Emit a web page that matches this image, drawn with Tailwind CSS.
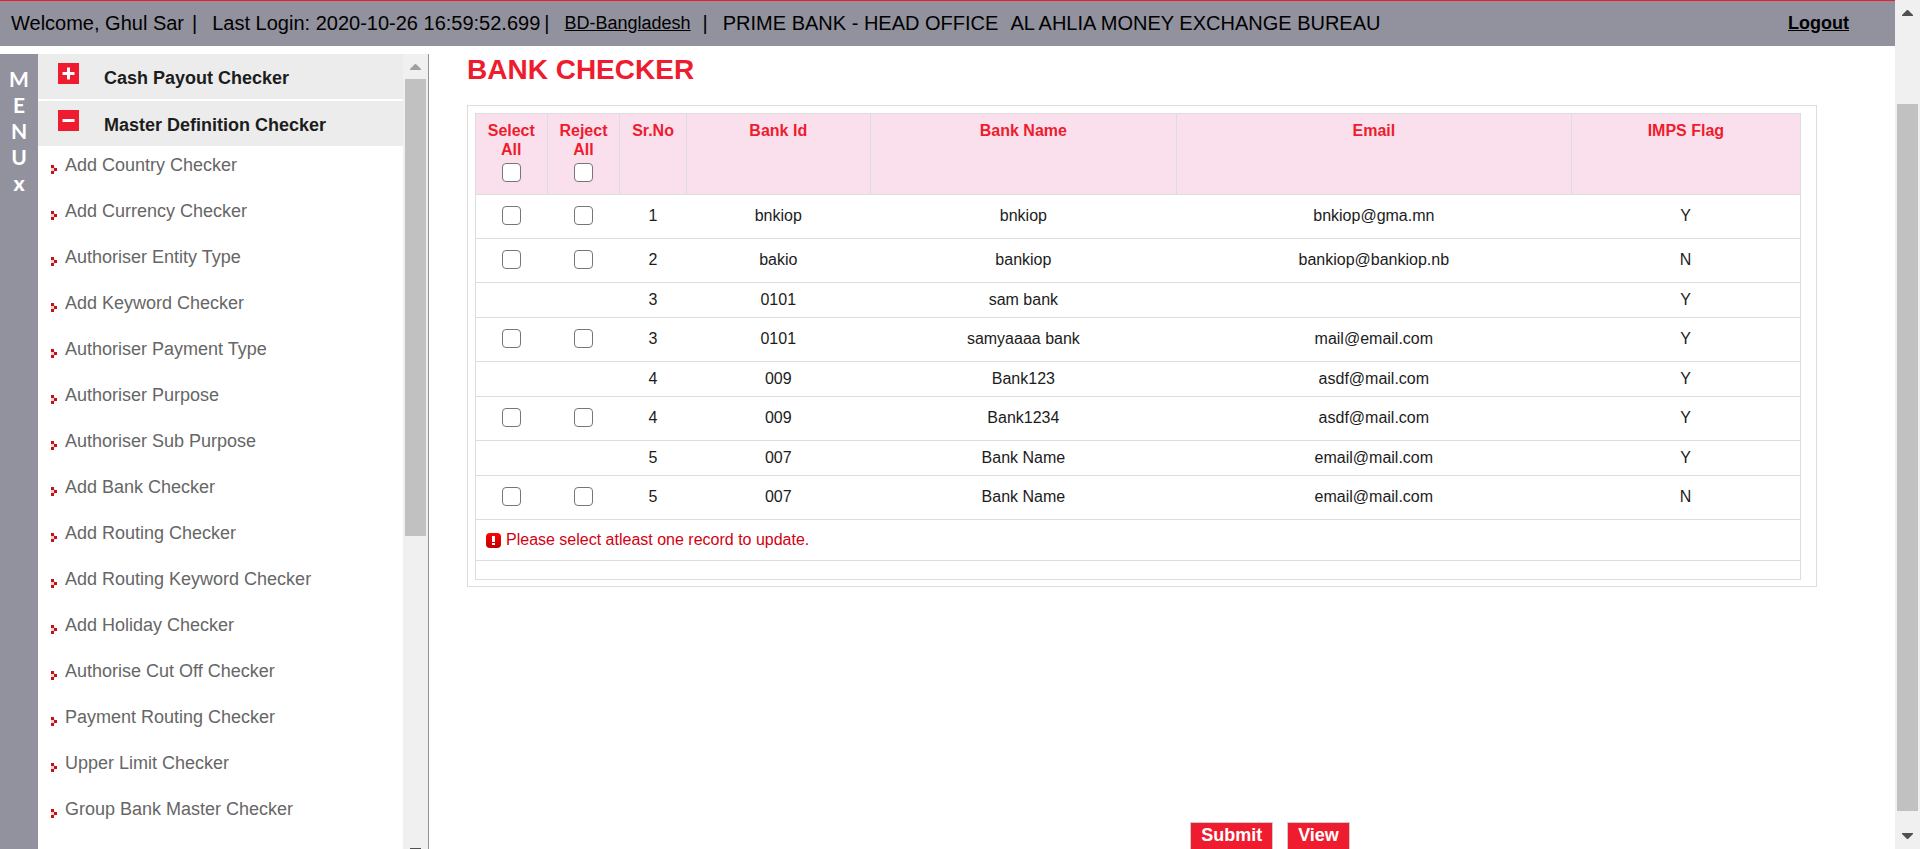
<!DOCTYPE html>
<html lang="en">
<head>
<meta charset="utf-8">
<title>Bank Checker</title>
<script src="https://cdn.jsdelivr.net/npm/@tailwindcss/browser@4"></script>
</head>
<body class="flex h-screen overflow-hidden bg-white font-['Liberation_Sans',Arial,sans-serif] text-black">
<svg class="hidden" aria-hidden="true">
  <symbol id="bullet" viewBox="0 0 6 9"><path fill="#f3cfd0" d="M0 3h3v3H0zM3 2h1v1H3zM3 6h1v1H3z"/><path fill="#c01416" d="M0 0h3v3H0zM3 3h3v3H3zM0 6h3v3H0z"/></symbol>
</svg>

<div class="flex min-w-0 flex-1 flex-col">
  <header class="flex h-[46px] shrink-0 items-center whitespace-nowrap border-t border-[#ee1c2e] bg-[#92929e] pr-[46px] pb-0.5 pl-[11px] text-xl">
    <span>Welcome, Ghul Sar</span>
    <span class="ml-2">|</span>
    <span class="ml-[15px]">Last Login: 2020-10-26 16:59:52.699</span>
    <span class="ml-1">|</span>
    <a href="#" class="ml-[15px] text-lg underline">BD-Bangladesh</a>
    <span class="ml-3">|</span>
    <span class="ml-[15px]">PRIME BANK - HEAD OFFICE</span>
    <span class="ml-3">AL AHLIA MONEY EXCHANGE BUREAU</span>
    <a href="#" class="ml-auto text-lg font-bold underline">Logout</a>
  </header>

  <div class="flex min-h-0 flex-1">
    <aside class="mt-2 flex shrink-0 border-r border-[#92929e]">
      <button type="button" class="flex w-[38px] flex-col items-center bg-[#92929e] pt-3 font-['Lato',sans-serif] text-[21px] leading-[26px] font-bold text-white">
        <span>M</span><span>E</span><span>N</span><span>U</span><span class="font-black">x</span>
      </button>
      <nav class="w-[365px] overflow-hidden text-lg text-[#666]">
        <button type="button" class="mb-0.5 flex h-[45px] w-full items-start bg-[#ececec] pt-[9px] pl-5 text-left font-bold text-[#1c1c1c]">
          <svg class="size-[21px] shrink-0" viewBox="0 0 21 21"><path fill="#ee1c2e" d="M0 0h21v21H0z"/><path stroke="#fff" stroke-width="3" d="M4.500 10.500h12M10.500 4.500v12"/></svg>
          <span class="ml-[25px] pt-px">Cash Payout Checker</span>
        </button>
        <button type="button" class="flex h-[45px] w-full items-start bg-[#ececec] pt-[9px] pl-5 text-left font-bold text-[#1c1c1c]">
          <svg class="size-[21px] shrink-0" viewBox="0 0 21 21"><path fill="#ee1c2e" d="M0 0h21v21H0z"/><path stroke="#fff" stroke-width="3" d="M4.500 10.500h12"/></svg>
          <span class="ml-[25px] pt-px">Master Definition Checker</span>
        </button>
        <ul class="-mt-1">
          <li><a href="#" class="flex h-[46px] items-center pl-[13px]"><svg class="mt-2 mr-2 h-[9px] w-1.5"><use href="#bullet"/></svg>Add Country Checker</a></li>
          <li><a href="#" class="flex h-[46px] items-center pl-[13px]"><svg class="mt-2 mr-2 h-[9px] w-1.5"><use href="#bullet"/></svg>Add Currency Checker</a></li>
          <li><a href="#" class="flex h-[46px] items-center pl-[13px]"><svg class="mt-2 mr-2 h-[9px] w-1.5"><use href="#bullet"/></svg>Authoriser Entity Type</a></li>
          <li><a href="#" class="flex h-[46px] items-center pl-[13px]"><svg class="mt-2 mr-2 h-[9px] w-1.5"><use href="#bullet"/></svg>Add Keyword Checker</a></li>
          <li><a href="#" class="flex h-[46px] items-center pl-[13px]"><svg class="mt-2 mr-2 h-[9px] w-1.5"><use href="#bullet"/></svg>Authoriser Payment Type</a></li>
          <li><a href="#" class="flex h-[46px] items-center pl-[13px]"><svg class="mt-2 mr-2 h-[9px] w-1.5"><use href="#bullet"/></svg>Authoriser Purpose</a></li>
          <li><a href="#" class="flex h-[46px] items-center pl-[13px]"><svg class="mt-2 mr-2 h-[9px] w-1.5"><use href="#bullet"/></svg>Authoriser Sub Purpose</a></li>
          <li><a href="#" class="flex h-[46px] items-center pl-[13px]"><svg class="mt-2 mr-2 h-[9px] w-1.5"><use href="#bullet"/></svg>Add Bank Checker</a></li>
          <li><a href="#" class="flex h-[46px] items-center pl-[13px]"><svg class="mt-2 mr-2 h-[9px] w-1.5"><use href="#bullet"/></svg>Add Routing Checker</a></li>
          <li><a href="#" class="flex h-[46px] items-center pl-[13px]"><svg class="mt-2 mr-2 h-[9px] w-1.5"><use href="#bullet"/></svg>Add Routing Keyword Checker</a></li>
          <li><a href="#" class="flex h-[46px] items-center pl-[13px]"><svg class="mt-2 mr-2 h-[9px] w-1.5"><use href="#bullet"/></svg>Add Holiday Checker</a></li>
          <li><a href="#" class="flex h-[46px] items-center pl-[13px]"><svg class="mt-2 mr-2 h-[9px] w-1.5"><use href="#bullet"/></svg>Authorise Cut Off Checker</a></li>
          <li><a href="#" class="flex h-[46px] items-center pl-[13px]"><svg class="mt-2 mr-2 h-[9px] w-1.5"><use href="#bullet"/></svg>Payment Routing Checker</a></li>
          <li><a href="#" class="flex h-[46px] items-center pl-[13px]"><svg class="mt-2 mr-2 h-[9px] w-1.5"><use href="#bullet"/></svg>Upper Limit Checker</a></li>
          <li><a href="#" class="flex h-[46px] items-center pl-[13px]"><svg class="mt-2 mr-2 h-[9px] w-1.5"><use href="#bullet"/></svg>Group Bank Master Checker</a></li>
        </ul>
      </nav>
      <!-- menu scrollbar -->
      <div class="flex w-[25px] flex-col items-center bg-[#f0f0f0]">
        <svg class="mt-[10px] h-1.5 w-[11px] shrink-0" viewBox="0 0 11 6"><path fill="#a0a0a0" d="M5 0h1l5 5v1H0V5z"/></svg>
        <div class="mt-[9px] h-[457px] w-[21px] shrink-0 bg-[#c1c1c1]"></div>
        <div class="mt-auto h-px w-[11px] bg-[#505050]"></div>
      </div>
    </aside>

    <main class="min-w-0 flex-1 overflow-hidden pr-[78px] pl-[38px]">
      <h1 class="pt-2 text-[28px] leading-[32px] font-bold text-[#ee1c2e]">BANK CHECKER</h1>
      <section class="mt-[19px] border border-[#ddd] pt-[7px] pr-[15px] pb-1.5 pl-[7px]">
        <table class="w-full table-fixed border-collapse border border-[#ddd] text-center text-base leading-[19px]">
          <colgroup><col class="w-[5.4%]"><col class="w-[5.5%]"><col class="w-[5%]"><col class="w-[13.9%]"><col class="w-[23.1%]"><col class="w-[29.8%]"><col class="w-[17.3%]"></colgroup>
          <thead class="bg-[#fae0ec] align-top text-[#ee1c2e]">
            <tr>
              <th class="border border-[#ddd] pt-[7px] pb-3"><label class="flex flex-col items-center">Select<br>All<input type="checkbox" class="mt-1 size-[19px] appearance-none rounded-[4px] border border-[#767676] bg-white"></label></th>
              <th class="border border-[#ddd] pt-[7px] pb-3"><label class="flex flex-col items-center">Reject<br>All<input type="checkbox" class="mt-1 size-[19px] appearance-none rounded-[4px] border border-[#767676] bg-white"></label></th>
              <th class="border border-[#ddd] pt-[7px]">Sr.No</th>
              <th class="border border-[#ddd] pt-[7px]">Bank Id</th>
              <th class="border border-[#ddd] pt-[7px]">Bank Name</th>
              <th class="border border-[#ddd] pt-[7px]">Email</th>
              <th class="border border-[#ddd] pt-[7px]">IMPS Flag</th>
            </tr>
          </thead>
          <tbody class="text-[#1c1c1c] [&_td]:pb-0.5">
            <tr class="h-11 border-b border-[#ddd]"><td><input type="checkbox" aria-label="Select record 1" class="block mx-auto size-[19px] appearance-none rounded-[4px] border border-[#767676] bg-white"></td><td><input type="checkbox" aria-label="Reject record 1" class="block mx-auto size-[19px] appearance-none rounded-[4px] border border-[#767676] bg-white"></td><td>1</td><td>bnkiop</td><td>bnkiop</td><td>bnkiop@gma.mn</td><td>Y</td></tr>
            <tr class="h-11 border-b border-[#ddd]"><td><input type="checkbox" aria-label="Select record 2" class="block mx-auto size-[19px] appearance-none rounded-[4px] border border-[#767676] bg-white"></td><td><input type="checkbox" aria-label="Reject record 2" class="block mx-auto size-[19px] appearance-none rounded-[4px] border border-[#767676] bg-white"></td><td>2</td><td>bakio</td><td>bankiop</td><td>bankiop@bankiop.nb</td><td>N</td></tr>
            <tr class="h-[35px] border-b border-[#ddd]"><td></td><td></td><td>3</td><td>0101</td><td>sam bank</td><td></td><td>Y</td></tr>
            <tr class="h-11 border-b border-[#ddd]"><td><input type="checkbox" aria-label="Select record 3" class="block mx-auto size-[19px] appearance-none rounded-[4px] border border-[#767676] bg-white"></td><td><input type="checkbox" aria-label="Reject record 3" class="block mx-auto size-[19px] appearance-none rounded-[4px] border border-[#767676] bg-white"></td><td>3</td><td>0101</td><td>samyaaaa bank</td><td>mail@email.com</td><td>Y</td></tr>
            <tr class="h-[35px] border-b border-[#ddd]"><td></td><td></td><td>4</td><td>009</td><td>Bank123</td><td>asdf@mail.com</td><td>Y</td></tr>
            <tr class="h-11 border-b border-[#ddd]"><td><input type="checkbox" aria-label="Select record 4" class="block mx-auto size-[19px] appearance-none rounded-[4px] border border-[#767676] bg-white"></td><td><input type="checkbox" aria-label="Reject record 4" class="block mx-auto size-[19px] appearance-none rounded-[4px] border border-[#767676] bg-white"></td><td>4</td><td>009</td><td>Bank1234</td><td>asdf@mail.com</td><td>Y</td></tr>
            <tr class="h-[35px] border-b border-[#ddd]"><td></td><td></td><td>5</td><td>007</td><td>Bank Name</td><td>email@mail.com</td><td>Y</td></tr>
            <tr class="h-11 border-b border-[#ddd]"><td><input type="checkbox" aria-label="Select record 5" class="block mx-auto size-[19px] appearance-none rounded-[4px] border border-[#767676] bg-white"></td><td><input type="checkbox" aria-label="Reject record 5" class="block mx-auto size-[19px] appearance-none rounded-[4px] border border-[#767676] bg-white"></td><td>5</td><td>007</td><td>Bank Name</td><td>email@mail.com</td><td>N</td></tr>
            <tr class="h-[41px] border-b border-[#ddd]">
              <td colspan="7">
                <p role="alert" class="flex items-center gap-[5px] pl-2.5 text-[#d40012]">
                  <svg class="mt-0.5 size-[15px]" viewBox="0 0 15 15"><defs><linearGradient id="alert" x2="0" y2="1"><stop stop-color="#ff0000"/><stop offset="1" stop-color="#c00000"/></linearGradient></defs><rect width="15" height="15" rx="4" fill="url(#alert)"/><path fill="#fff" d="M6 3h3v6H6zM6 10h3v2H6z"/></svg>
                  Please select atleast one record to update.
                </p>
              </td>
            </tr>
            <tr class="h-[19px]"><td colspan="7"></td></tr>
          </tbody>
        </table>
      </section>
      <div class="mt-[235px] flex justify-center gap-3.5 pl-64">
        <button type="submit" class="h-[30px] shrink-0 border border-[#ccc] bg-[#ee1c2e] px-2.5 pb-1 text-lg leading-6 font-bold text-white">Submit</button>
        <button type="button" class="h-[30px] shrink-0 border border-[#ccc] bg-[#ee1c2e] px-2.5 pb-1 text-lg leading-6 font-bold text-white">View</button>
      </div>
    </main>
  </div>
</div>

<!-- page scrollbar -->
<div class="flex w-[25px] shrink-0 flex-col items-center bg-[#f0f0f0]">
  <svg class="mt-[10px] h-1.5 w-[11px] shrink-0" viewBox="0 0 11 6"><path fill="#505050" d="M5 0h1l5 5v1H0V5z"/></svg>
  <div class="mt-[88px] mb-[22px] w-[21px] flex-1 bg-[#c1c1c1]"></div>
  <svg class="mb-[10px] h-1.5 w-[11px] shrink-0" viewBox="0 0 11 6"><path fill="#505050" d="M0 0h11v1L6 6H5L0 1z"/></svg>
</div>
</body>
</html>
